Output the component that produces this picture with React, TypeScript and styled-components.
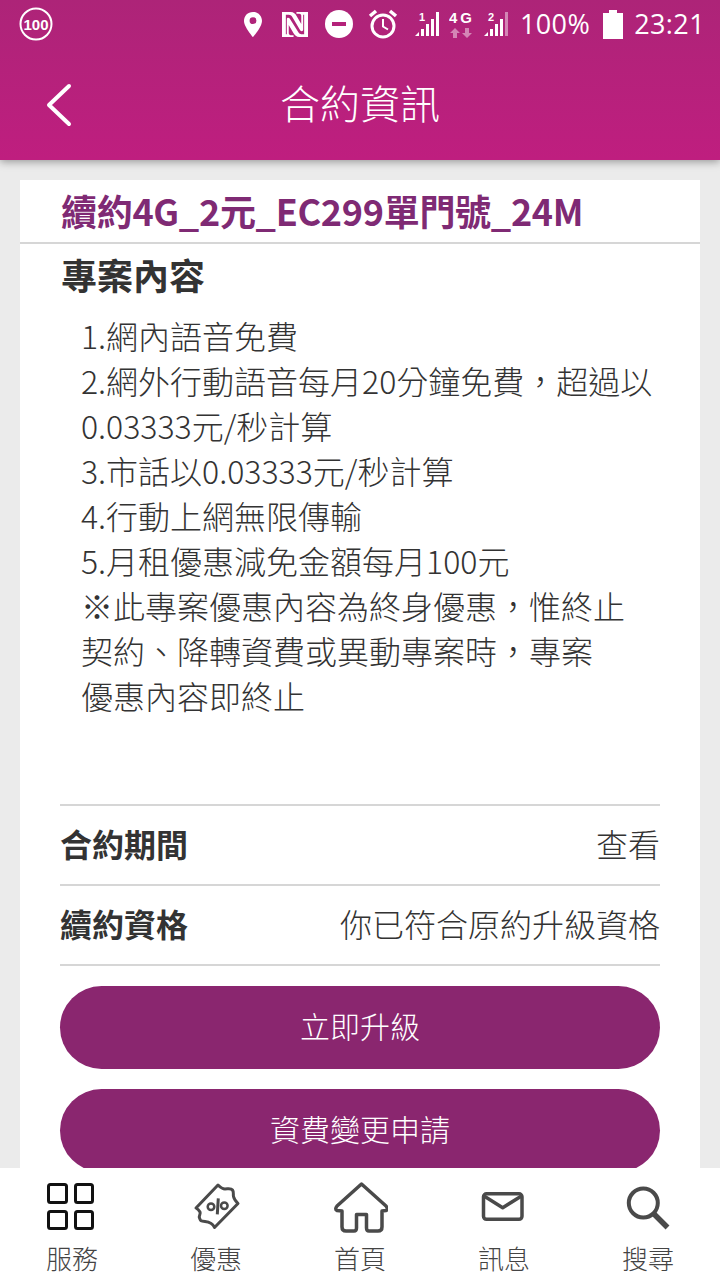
import styled, { createGlobalStyle } from 'styled-components'

const cjk = '"Noto Sans CJK TC", "Noto Sans", sans-serif'

const GlobalStyle = createGlobalStyle`
  html, body {
    margin: 0;
    padding: 0;
    background: #ebebeb;
  }
  * {
    box-sizing: border-box;
  }
`

const Screen = styled.div`
  width: 720px;
  height: 1280px;
  display: flex;
  flex-direction: column;
  overflow: hidden;
  background: #ebebeb;
  font-family: ${cjk};
`

const Header = styled.header`
  flex: none;
  height: 160px;
  background: linear-gradient(180deg, #ad2478 0%, #bf1e7f 100%);
  box-shadow: 0 2px 8px rgba(0, 0, 0, 0.35);
  color: #fff;
  position: relative;
  z-index: 2;
`

const StatusBar = styled.div`
  height: 48px;
  display: flex;
  align-items: center;
  padding: 0 15px 0 19px;
`

const StatusRight = styled.div`
  margin-left: auto;
  display: flex;
  align-items: center;
`

const StatusText = styled.span<{ $gap: number }>`
  font-family: 'Open Sans', sans-serif;
  font-size: 27px;
  line-height: 48px;
  letter-spacing: 0.4px;
  margin-left: ${(p) => p.$gap}px;
`

const StatusIcon = styled.svg<{ $gap: number }>`
  display: block;
  flex: none;
  margin-left: ${(p) => p.$gap}px;
`

const TitleBar = styled.div`
  height: 112px;
  padding-bottom: 5px;
  display: flex;
  align-items: center;
  justify-content: center;
  position: relative;
`

const BackButton = styled.svg`
  position: absolute;
  left: 44px;
  top: 35px;
`

const Title = styled.h1`
  margin: 0;
  font-size: 40px;
  line-height: 56px;
  font-weight: 300;
`

const Content = styled.main`
  flex: 1;
  min-height: 0;
  overflow: hidden;
  padding: 20px 20px 0;
`

const Card = styled.section`
  background: #fff;
  padding-bottom: 20px;
`

const PlanName = styled.div`
  height: 64px;
  padding: 0 0 0 41px;
  border-bottom: 2px solid #d6d6d6;
  color: #7f2a74;
  font-size: 36px;
  font-weight: 700;
  line-height: 60px;
  letter-spacing: -0.3px;
  white-space: nowrap;
`

const SectionTitle = styled.h2`
  margin: 0;
  padding: 0 0 0 41px;
  height: 69px;
  color: #333;
  font-size: 36px;
  line-height: 60px;
  font-weight: 700;
`

const Details = styled.div`
  padding: 0 40px 0 61px;
  height: 491px;
  color: #333;
  font-size: 32px;
  line-height: 45px;
  font-weight: 300;
`

const DetailLine = styled.div`
  white-space: nowrap;
`

const InfoList = styled.div`
  margin: 0 40px;
  border-top: 2px solid #d6d6d6;
`

const InfoRow = styled.div`
  height: 80px;
  padding-bottom: 4px;
  display: flex;
  align-items: center;
  justify-content: space-between;
  border-bottom: 2px solid #d6d6d6;
  color: #333;
  font-size: 32px;
  font-weight: 300;
`

const InfoLabel = styled.span`
  font-weight: 700;
`

const Actions = styled.div`
  margin: 20px 40px 0;
  display: flex;
  flex-direction: column;
  gap: 20px;
`

const ActionButton = styled.button`
  height: 83px;
  padding: 0 0 5px;
  border: 0;
  border-radius: 42px;
  background: #8a266f;
  color: #fff;
  font-family: ${cjk};
  font-size: 30px;
  font-weight: 300;
`

const BottomNav = styled.nav`
  flex: none;
  height: 112px;
  display: grid;
  grid-template-columns: repeat(5, 1fr);
  background: #fff;
  position: relative;
  z-index: 1;
`

const NavItem = styled.div`
  display: flex;
  flex-direction: column;
  align-items: center;
  color: #444;
`

const NavIcon = styled.svg`
  display: block;
  margin-top: 13px;
`

const NavLabel = styled.span`
  font-size: 26px;
  line-height: 36px;
  margin-top: 5px;
  font-weight: 300;
`

const detailLines = [
  '1.網內語音免費',
  '2.網外行動語音每月20分鐘免費，超過以',
  '0.03333元/秒計算',
  '3.市話以0.03333元/秒計算',
  '4.行動上網無限傳輸',
  '5.月租優惠減免金額每月100元',
  '※此專案優惠內容為終身優惠，惟終止',
  '契約、降轉資費或異動專案時，專案',
  '優惠內容即終止',
]

const Bars = ({ dim }: { dim?: boolean }) => (
  <>
    <path d="M0 26h4v-4z" fill="#fff" />
    <rect x="6" y="19" width="3" height="7" fill="#fff" />
    <rect x="11" y="14" width="3" height="12" fill="#fff" />
    <rect x="16" y="9" width="3" height="17" fill="#fff" />
    <rect x="21" y="2" width="3" height="24" fill="#fff" opacity={dim ? 0.45 : 1} />
  </>
)

const labelStyle = { fontFamily: '"Liberation Sans", sans-serif', fontWeight: 700 }

const StatusBarRow = () => (
  <StatusBar>
    <svg width="34" height="34" viewBox="0 0 34 34">
      <circle cx="17" cy="17" r="15.5" fill="none" stroke="#fff" strokeWidth="2" />
      <text x="17" y="23" textAnchor="middle" fontSize="15" fill="#fff" style={labelStyle}>
        100
      </text>
    </svg>
    <StatusRight>
      <StatusIcon $gap={0} width="20" height="27" viewBox="0 0 22 30">
        <path
          fillRule="evenodd"
          d="M11 1C5 1 1 5.400 1 11c0 6.500 10 18 10 18s10-11.500 10-18C21 5.400 17 1 11 1zm0 13.500a3.800 3.800 0 1 1 0-7.600 3.800 3.800 0 0 1 0 7.600z"
          fill="#fff"
        />
      </StatusIcon>
      <StatusIcon $gap={19} width="26" height="25" viewBox="0 0 27 27" preserveAspectRatio="none">
        <path
          fillRule="evenodd"
          d="M0 0h9c3 0 5 2 6 4l5 9V4c0-1-1-2-2-2h-3V0h12v27h-9c-3 0-5-2-6-4L7 14v9c0 1 1 2 2 2h3v2H0z M4 3v21h1V8c0-2 2-2 3-1l9 15c1 1.500 2 2 3 2h3V3h-1v16c0 2-2 2-3 1L11 6c-1-2-2-3-4-3z"
          fill="#fff"
        />
      </StatusIcon>
      <StatusIcon $gap={17} width="28" height="28" viewBox="0 0 28 28">
        <circle cx="14" cy="14" r="14" fill="#fff" />
        <rect x="7" y="12" width="14" height="4" fill="#b4227a" />
      </StatusIcon>
      <StatusIcon $gap={15} width="30" height="30" viewBox="0 0 30 30">
        <circle cx="15" cy="17" r="11" fill="none" stroke="#fff" strokeWidth="3" />
        <path d="M15 10v7.500l5 3" fill="none" stroke="#fff" strokeWidth="2" />
        <path d="M2 7l6-5M28 7l-6-5" fill="none" stroke="#fff" strokeWidth="3.500" />
      </StatusIcon>
      <StatusIcon $gap={17} width="24" height="28" viewBox="0 0 24 28">
        <text x="4" y="11" fontSize="11" fill="#fff" style={labelStyle}>
          1
        </text>
        <Bars />
      </StatusIcon>
      <StatusIcon $gap={10} width="24" height="28" viewBox="0 0 24 28">
        <text x="0" y="13" fontSize="15" fill="#fff" style={labelStyle} textLength="23">
          4G
        </text>
        <path d="M6 18l5 5H8v5H4v-5H1zM18 28l-5-5h3v-5h4v5h3z" fill="#fff" opacity="0.45" />
      </StatusIcon>
      <StatusIcon $gap={11} width="24" height="28" viewBox="0 0 24 28">
        <text x="4" y="11" fontSize="11" fill="#fff" style={labelStyle}>
          2
        </text>
        <Bars dim />
      </StatusIcon>
      <StatusText $gap={12}>100%</StatusText>
      <StatusIcon $gap={13} width="20" height="29" viewBox="0 0 20 29">
        <path d="M6 0h8v3h6v26H0V3h6z" fill="#fff" />
      </StatusIcon>
      <StatusText $gap={11}>23:21</StatusText>
    </StatusRight>
  </StatusBar>
)

const navStroke = { fill: 'none', stroke: '#4a4a4a', strokeWidth: 3 }

const navItems = [
  {
    label: '服務',
    icon: (
      <g fill="none" stroke="#111" strokeWidth="3">
        <rect x="4.500" y="3.500" width="18" height="18" rx="2" />
        <rect x="31.500" y="3.500" width="17" height="18" rx="2" />
        <rect x="4.500" y="30.500" width="18" height="17" rx="2" />
        <rect x="31.500" y="30.500" width="17" height="17" rx="2" />
      </g>
    ),
  },
  {
    label: '優惠',
    icon: (
      <g {...navStroke} strokeLinejoin="round">
        <path d="M8 27L30 4c2 2 4 4 7 4s6-1 7.500 1 .5 4 1 6.500 1.500 4 4.500 7L26.500 46.500C25 43 22 41 17 40.500s-4.500-1-5.500-3.500 1.500-4 .5-6-2-3-4-4z" />
        <path d="M30.300 17.300l-1 16" />
        <circle cx="23" cy="25.700" r="3.300" strokeWidth="2.500" />
        <circle cx="36.300" cy="24.700" r="3.300" strokeWidth="2.500" />
      </g>
    ),
  },
  {
    label: '首頁',
    icon: (
      <g {...navStroke} strokeLinejoin="round" strokeWidth="3.500">
        <path d="M29.500 3L5 25q-2.500 3 0 4.500l5 .5v16q0 4 4 4h8q2.500 0 2.500-3V33.500h10V47q0 3 2.500 3h9q4 0 4-4V30l4-.5q2.500-1.500 0-4.500z" />
      </g>
    ),
  },
  {
    label: '訊息',
    icon: (
      <g {...navStroke} strokeWidth="3.500" strokeLinejoin="round">
        <rect x="7.500" y="12.800" width="38.500" height="25.500" rx="3" />
        <path d="M8 15l18.700 11.700L45.500 15" />
      </g>
    ),
  },
  {
    label: '搜尋',
    icon: (
      <g fill="none" stroke="#4a4a4a">
        <circle cx="23.300" cy="22" r="14.500" strokeWidth="4" />
        <path d="M34 33l13.500 13.500" strokeWidth="5.500" />
      </g>
    ),
  },
]

const App = () => (
  <Screen>
    <GlobalStyle />
    <Header>
      <StatusBarRow />
      <TitleBar>
        <BackButton width="30" height="44" viewBox="0 0 30 44">
          <path d="M25 3L5 22l20 19" fill="none" stroke="#fff" strokeWidth="4" strokeLinecap="round" strokeLinejoin="round" />
        </BackButton>
        <Title>合約資訊</Title>
      </TitleBar>
    </Header>
    <Content>
      <Card>
        <PlanName>續約4G_2元_EC299單門號_24M</PlanName>
        <SectionTitle>專案內容</SectionTitle>
        <Details>
          {detailLines.map((line) => (
            <DetailLine key={line}>{line}</DetailLine>
          ))}
        </Details>
        <InfoList>
          <InfoRow>
            <InfoLabel>合約期間</InfoLabel>
            <span>查看</span>
          </InfoRow>
          <InfoRow>
            <InfoLabel>續約資格</InfoLabel>
            <span>你已符合原約升級資格</span>
          </InfoRow>
        </InfoList>
        <Actions>
          <ActionButton>立即升級</ActionButton>
          <ActionButton>資費變更申請</ActionButton>
        </Actions>
      </Card>
    </Content>
    <BottomNav>
      {navItems.map((item) => (
        <NavItem key={item.label}>
          <NavIcon width="56" height="54" viewBox="0 0 56 54">
            {item.icon}
          </NavIcon>
          <NavLabel>{item.label}</NavLabel>
        </NavItem>
      ))}
    </BottomNav>
  </Screen>
)

export default App
